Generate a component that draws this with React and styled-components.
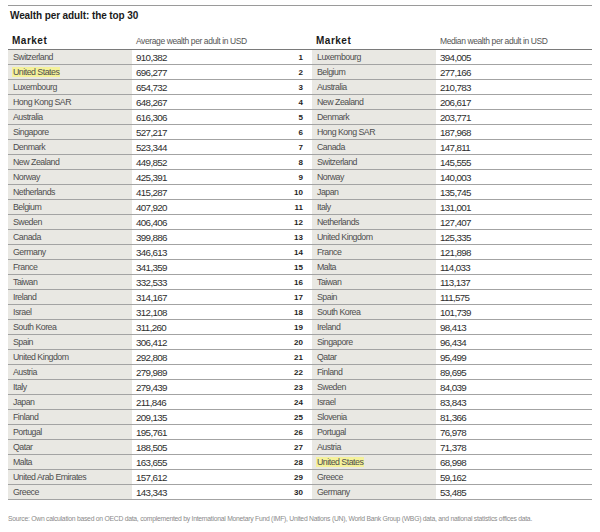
import styled, { createGlobalStyle } from "styled-components";

const GlobalStyle = createGlobalStyle`
  html, body {
    margin: 0;
    padding: 0;
    background: #ffffff;
  }
  body {
    font-family: "Liberation Sans", Arial, sans-serif;
  }
`;

const Page = styled.div`
  width: 600px;
  height: 532px;
  padding: 5px 8px 0 8px;
  box-sizing: border-box;
  overflow: hidden;
`;

const TopRule = styled.div`
  border-top: 1px solid #9a9a9a;
`;

const Title = styled.h1`
  margin: 0;
  padding: 4px 0 0 2px;
  height: 21px;
  box-sizing: border-box;
  font-size: 10px;
  font-weight: bold;
  color: #1a1a1a;
  letter-spacing: -0.1px;
`;

const Row = styled.div`
  display: grid;
  grid-template-columns: 124px 158px 22px 124px 1fr;
  height: 15px;
  border-bottom: 1px solid ${(props) => (props.$head ? "#7a7a7a" : "#a3a3a3")};
  box-sizing: border-box;
  align-items: stretch;
`;

const HeadRow = styled(Row)`
  height: 23px;
  align-items: end;
`;

const Cell = styled.div`
  display: flex;
  align-items: center;
  justify-content: ${(props) => (props.$right ? "flex-end" : "flex-start")};
  padding: ${(props) => (props.$right ? "0 9px 0 0" : "0 0 0 4px")};
  background: ${(props) => (props.$shade ? "#e9e8e3" : "transparent")};
  white-space: nowrap;
  overflow: hidden;
`;

const HeadCell = styled(Cell)`
  padding-bottom: 3px;
  background: transparent;
  font-weight: ${(props) => (props.$bold ? "bold" : "normal")};
  font-size: ${(props) => (props.$bold ? "10px" : "8.5px")};
  letter-spacing: ${(props) => (props.$bold ? "0.5px" : "-0.4px")};
  color: ${(props) => (props.$bold ? "#1a1a1a" : "#555")};
`;

const Name = styled.span`
  color: #4e4e4e;
  font-size: 8.8px;
  letter-spacing: -0.5px;
  padding: 0 1px;
  background: ${(props) => (props.$mark ? "#f4f19a" : "transparent")};
`;

const Value = styled.span`
  color: #2e2e2e;
  font-size: 9.8px;
  letter-spacing: -0.65px;
`;

const Rank = styled.span`
  font-weight: bold;
  font-size: 8px;
  color: #1e1e1e;
`;

const Source = styled.p`
  margin: 15px 0 0 0;
  font-size: 6.8px;
  letter-spacing: -0.26px;
  color: #8a8a8a;
  white-space: nowrap;
`;

const average = [
  ["Switzerland", "910,382"],
  ["United States", "696,277"],
  ["Luxembourg", "654,732"],
  ["Hong Kong SAR", "648,267"],
  ["Australia", "616,306"],
  ["Singapore", "527,217"],
  ["Denmark", "523,344"],
  ["New Zealand", "449,852"],
  ["Norway", "425,391"],
  ["Netherlands", "415,287"],
  ["Belgium", "407,920"],
  ["Sweden", "406,406"],
  ["Canada", "399,886"],
  ["Germany", "346,613"],
  ["France", "341,359"],
  ["Taiwan", "332,533"],
  ["Ireland", "314,167"],
  ["Israel", "312,108"],
  ["South Korea", "311,260"],
  ["Spain", "306,412"],
  ["United Kingdom", "292,808"],
  ["Austria", "279,989"],
  ["Italy", "279,439"],
  ["Japan", "211,846"],
  ["Finland", "209,135"],
  ["Portugal", "195,761"],
  ["Qatar", "188,505"],
  ["Malta", "163,655"],
  ["United Arab Emirates", "157,612"],
  ["Greece", "143,343"],
];

const median = [
  ["Luxembourg", "394,005"],
  ["Belgium", "277,166"],
  ["Australia", "210,783"],
  ["New Zealand", "206,617"],
  ["Denmark", "203,771"],
  ["Hong Kong SAR", "187,968"],
  ["Canada", "147,811"],
  ["Switzerland", "145,555"],
  ["Norway", "140,003"],
  ["Japan", "135,745"],
  ["Italy", "131,001"],
  ["Netherlands", "127,407"],
  ["United Kingdom", "125,335"],
  ["France", "121,898"],
  ["Malta", "114,033"],
  ["Taiwan", "113,137"],
  ["Spain", "111,575"],
  ["South Korea", "101,739"],
  ["Ireland", "98,413"],
  ["Singapore", "96,434"],
  ["Qatar", "95,499"],
  ["Finland", "89,695"],
  ["Sweden", "84,039"],
  ["Israel", "83,843"],
  ["Slovenia", "81,366"],
  ["Portugal", "76,978"],
  ["Austria", "71,378"],
  ["United States", "68,998"],
  ["Greece", "59,162"],
  ["Germany", "53,485"],
];

export default function App() {
  return (
    <>
      <GlobalStyle />
      <Page>
        <TopRule />
        <Title>Wealth per adult: the top 30</Title>
        <HeadRow $head>
          <HeadCell $bold>Market</HeadCell>
          <HeadCell>Average wealth per adult in USD</HeadCell>
          <HeadCell />
          <HeadCell $bold>Market</HeadCell>
          <HeadCell>Median wealth per adult in USD</HeadCell>
        </HeadRow>
        {average.map(([name, value], i) => (
          <Row key={name}>
            <Cell $shade>
              <Name $mark={name === "United States"}>{name}</Name>
            </Cell>
            <Cell>
              <Value>{value}</Value>
            </Cell>
            <Cell $right>
              <Rank>{i + 1}</Rank>
            </Cell>
            <Cell $shade>
              <Name $mark={median[i][0] === "United States"}>
                {median[i][0]}
              </Name>
            </Cell>
            <Cell>
              <Value>{median[i][1]}</Value>
            </Cell>
          </Row>
        ))}
        <Source>
          Source: Own calculation based on OECD data, complemented by
          International Monetary Fund (IMF), United Nations (UN), World Bank
          Group (WBG) data, and national statistics offices data.
        </Source>
      </Page>
    </>
  );
}
